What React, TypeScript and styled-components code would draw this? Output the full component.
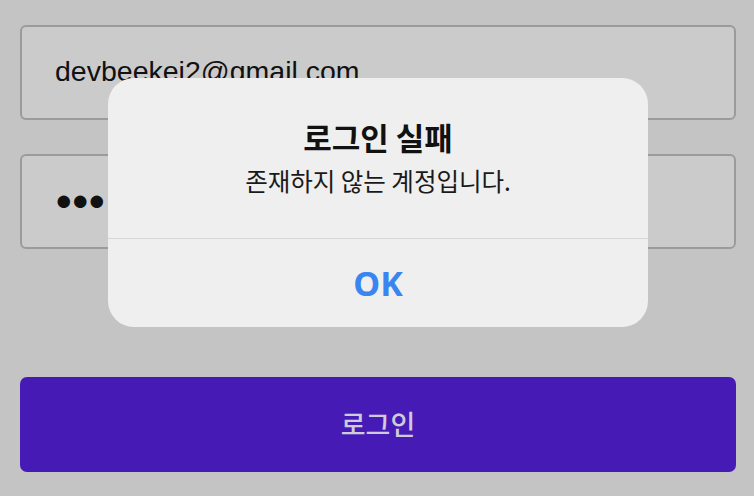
import React from "react";
import styled, { createGlobalStyle } from "styled-components";

const Global = createGlobalStyle`
  html, body { margin: 0; padding: 0; }
  body {
    width: 754px;
    height: 496px;
    overflow: hidden;
    background: #c4c4c4;
    font-family: "Inter", "Noto Sans CJK KR", sans-serif;
  }
`;

const Page = styled.div`
  position: relative;
  width: 754px;
  height: 496px;
  box-sizing: border-box;
  padding: 25px 18px 0 20px;
  display: flex;
  flex-direction: column;
  background: #c4c4c4;
`;

const Field = styled.div<{ $gap: number }>`
  box-sizing: border-box;
  height: 95px;
  border: 2px solid #9b9b9b;
  border-radius: 6px;
  background: #cbcbcb;
  display: flex;
  align-items: center;
  padding-left: 33px;
  margin-bottom: ${(p) => p.$gap}px;
  color: #111;
`;

const EmailText = styled.span`
  font-family: "Liberation Sans", "Noto Sans", sans-serif;
  font-size: 28.5px;
  margin-top: -2px;
`;

const Dots = styled.span`
  font-family: "Liberation Sans", sans-serif;
  font-size: 29px;
  letter-spacing: -1px;
  margin-top: -2px;
`;

const LoginButton = styled.div`
  box-sizing: border-box;
  height: 95px;
  border-radius: 7px;
  background: #461bb5;
  display: flex;
  align-items: center;
  justify-content: center;
  color: #d0cbd8;
  font-family: "Noto Sans CJK KR", sans-serif;
  font-size: 27px;
  font-weight: 500;
  padding-bottom: 2px;
`;

const Dialog = styled.div`
  position: absolute;
  left: 108px;
  top: 78px;
  width: 540px;
  height: 249px;
  border-radius: 26px;
  background: #efefef;
  display: flex;
  flex-direction: column;
  overflow: hidden;
`;

const Body = styled.div`
  height: 161px;
  box-sizing: border-box;
  padding-top: 38px;
  display: flex;
  flex-direction: column;
  align-items: center;
  border-bottom: 1.5px solid #d6d6d6;
`;

const Title = styled.div`
  font-family: "Noto Sans CJK KR", sans-serif;
  font-weight: 600;
  font-size: 31px;
  line-height: 42px;
  color: #111;
`;

const Message = styled.div`
  font-family: "Noto Sans CJK KR", sans-serif;
  font-size: 24.5px;
  line-height: 32px;
  margin-top: 7px;
  color: #1a1a1a;
`;

const Action = styled.div`
  flex: 1;
  display: flex;
  align-items: center;
  justify-content: center;
  font-family: "Noto Sans", "Liberation Sans", sans-serif;
  font-weight: 700;
  font-size: 34px;
  color: #3a86f1;
`;

export default function App() {
  return (
    <>
      <Global />
      <Page>
        <Field $gap={34}>
          <EmailText>devbeekei2@gmail.com</EmailText>
        </Field>
        <Field $gap={128}>
          <Dots>●●●</Dots>
        </Field>
        <LoginButton>로그인</LoginButton>
        <Dialog>
          <Body>
            <Title>로그인 실패</Title>
            <Message>존재하지 않는 계정입니다.</Message>
          </Body>
          <Action>OK</Action>
        </Dialog>
      </Page>
    </>
  );
}
